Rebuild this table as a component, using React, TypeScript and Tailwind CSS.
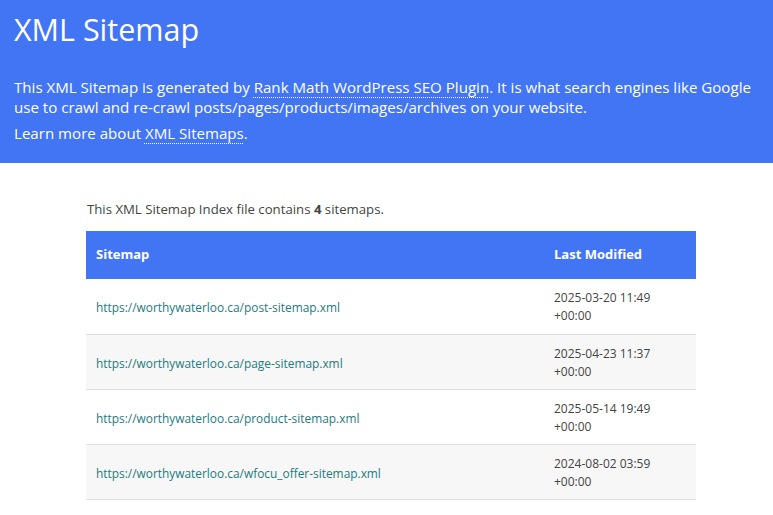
const rows = [
  { loc: 'https://worthywaterloo.ca/post-sitemap.xml', date: '2025-03-20 11:49', tz: '+00:00' },
  { loc: 'https://worthywaterloo.ca/page-sitemap.xml', date: '2025-04-23 11:37', tz: '+00:00' },
  { loc: 'https://worthywaterloo.ca/product-sitemap.xml', date: '2025-05-14 19:49', tz: '+00:00' },
  { loc: 'https://worthywaterloo.ca/wfocu_offer-sitemap.xml', date: '2024-08-02 03:59', tz: '+00:00' },
];

export default function App() {
  return (
    <div className="min-h-[515px] bg-white text-[#444] font-['Open_Sans',sans-serif]">
      {/* description banner */}
      <div className="bg-[#4275f4] text-white px-[14px] pt-[9px] pb-[20px]">
        <h1 className="text-[30.5px] leading-[40px] font-normal">XML Sitemap</h1>
        <p className="mt-[28px] text-[15.1px] leading-[20px]">
          This XML Sitemap is generated by{' '}
          <a href="#" className="underline decoration-dotted decoration-1 underline-offset-[4px]">Rank Math WordPress SEO Plugin</a>. It is what search
          engines like Google use to crawl and re-crawl posts/pages/products/images/archives on your website.
        </p>
        <p className="mt-[6px] text-[15.1px] leading-[20px]">
          Learn more about{' '}
          <a href="#" className="underline decoration-dotted decoration-1 underline-offset-[4px]">XML Sitemaps</a>.
        </p>
      </div>

      <div className="ml-[86px] w-[610px] pt-[37px]">
        <p className="text-[13.2px] leading-[18px] pl-[1px]">
          This XML Sitemap Index file contains <strong>4</strong> sitemaps.
        </p>
        <table className="mt-[13px] w-full table-fixed border-collapse">
          <thead>
            <tr className="bg-[#4275f4] text-white text-[13px]">
              <th className="h-[48px] px-[10px] text-left font-bold">Sitemap</th>
              <th className="h-[48px] w-[152px] px-[10px] text-left font-bold">Last Modified</th>
            </tr>
          </thead>
          <tbody>
            {rows.map((r, i) => (
              <tr key={r.loc} className={i % 2 === 1 ? 'bg-[#f7f7f7]' : 'bg-white'}>
                <td className="h-[55px] px-[10px] pt-[4px] border-b border-[#ddd] text-[11.9px]">
                  <a href="#" className="text-[#1e7b80]">{r.loc}</a>
                </td>
                <td className="h-[55px] px-[10px] pt-[2px] border-b border-[#ddd] text-[12px] leading-[18px]">
                  {r.date}
                  <br />
                  {r.tz}
                </td>
              </tr>
            ))}
          </tbody>
        </table>
      </div>
    </div>
  );
}
